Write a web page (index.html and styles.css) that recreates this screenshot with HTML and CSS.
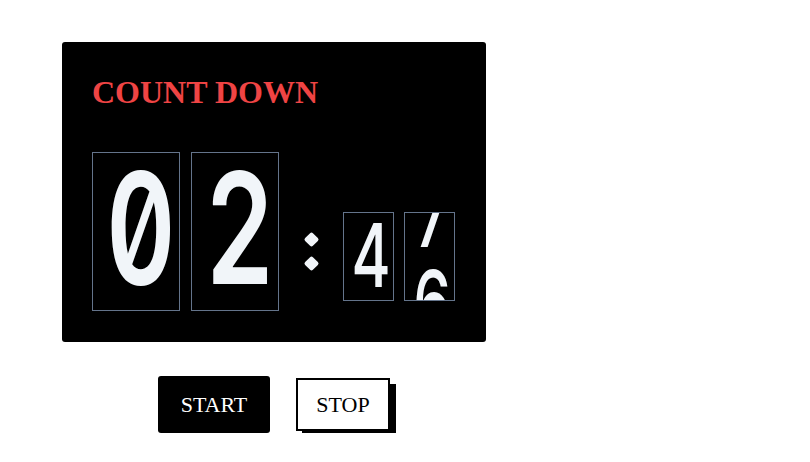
FILE: index.html
```html
<!DOCTYPE html>
<html>
<head>
<meta charset="utf-8">
<link rel="stylesheet" href="styles.css">
</head>
<body>
<div class="app">
  <section class="card">
    <h1 class="title">COUNT DOWN</h1>
    <div class="clock">
      <div class="big-box"><span class="big-digit">0</span></div>
      <div class="big-box"><span class="big-digit">2</span></div>
      <div class="colon"><span class="dot"></span><span class="dot"></span></div>
      <div class="small-group">
        <div class="small-box"><span class="small-digit">4</span></div>
        <div class="small-box">
          <div class="roll">
            <span class="small-digit">7</span>
            <span class="small-digit">6</span>
          </div>
        </div>
      </div>
    </div>
  </section>
  <div class="controls">
    <button class="btn btn-start">START</button>
    <button class="btn btn-stop">STOP</button>
  </div>
</div>
</body>
</html>
```
FILE: styles.css
```css
html, body {
  margin: 0;
  background: #fff;
}
body {
  padding: 42px 0 0 62px;
}
.app {
  display: inline-flex;
  flex-direction: column;
  align-items: center;
}
.card {
  background: #000;
  border-radius: 3px;
  padding: 32px 31px 31px 30px;
}
.title {
  margin: 0;
  font-family: "Liberation Serif", serif;
  font-weight: bold;
  font-size: 32px;
  line-height: normal;
  color: #ef4444;
  height: 37px;
}
.clock {
  margin-top: 41px;
  display: flex;
  align-items: flex-end;
}
.big-box {
  width: 86px;
  height: 157px;
  border: 1px solid #64748b;
  overflow: hidden;
  margin-right: 11px;
}
.big-box + .big-box {
  margin-right: 0;
}
.big-digit {
  display: block;
  font-family: "Inter", sans-serif;
  font-weight: 600;
  font-feature-settings: "zero" 1, "tnum" 1;
  font-size: 154px;
  line-height: 150px;
  color: #f1f5f9;
  text-align: center;
  transform: scaleX(0.7);
}
.colon {
  width: 64px;
  height: 80px;
  align-self: center;
  margin-top: 40px;
  display: flex;
  flex-direction: column;
  align-items: center;
  justify-content: center;
  gap: 13px;
}
.dot {
  width: 11px;
  height: 11px;
  background: #f1f5f9;
  border-radius: 2px;
  transform: rotate(45deg);
}
.small-group {
  display: flex;
  gap: 10px;
  margin-bottom: 10px;
}
.small-box {
  width: 49px;
  height: 87px;
  border: 1px solid #64748b;
  overflow: hidden;
}
.small-digit {
  display: block;
  height: 87px;
  font-family: "Inter", sans-serif;
  font-weight: 500;
  font-feature-settings: "zero" 1, "tnum" 1;
  font-size: 88px;
  line-height: 84px;
  color: #f1f5f9;
  text-align: center;
  transform: scaleX(0.68);
}
.roll {
  transform: translateY(-40px);
}
.controls {
  margin-top: 34px;
  display: flex;
  align-items: center;
  gap: 26px;
}
.btn {
  font-family: "Liberation Serif", serif;
  font-size: 22px;
  line-height: 25px;
  cursor: pointer;
  margin: 0;
  padding: 0;
  display: flex;
  align-items: center;
  justify-content: center;
}
.btn-start {
  width: 112px;
  height: 57px;
  background: #000;
  color: #fff;
  border: none;
  border-radius: 3px;
}
.btn-stop {
  width: 94px;
  height: 53px;
  background: #fff;
  color: #000;
  border: 2px solid #000;
  border-radius: 0;
  box-shadow: 6px 6px 0 #000;
}
```
